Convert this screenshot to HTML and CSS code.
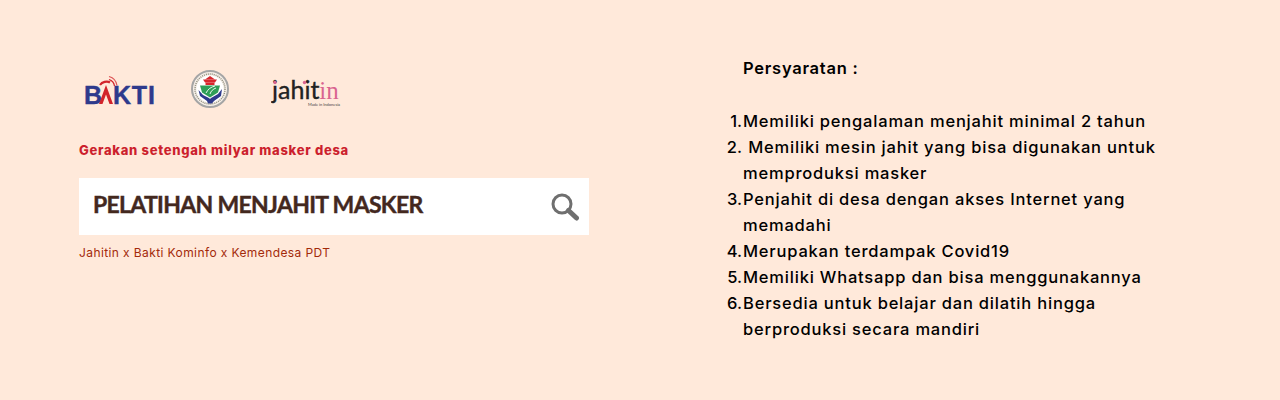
FILE: index.html
```html
<!DOCTYPE html>
<html lang="id">
<head>
<meta charset="utf-8">
<title>Pelatihan Menjahit Masker</title>
<link rel="stylesheet" href="styles.css">
</head>
<body>
<main class="banner">
  <section class="left">
    <div class="logos">
      <svg class="logo-bakti" width="72" height="38" viewBox="0 0 72 38">
        <path d="M25 3.500a11 11 0 0 1 8 9" fill="none" stroke="#d2232a" stroke-width="1.200" opacity=".75"/>
        <path d="M25 6.500a8 8 0 0 1 5.500 6.500" fill="none" stroke="#d2232a" stroke-width="1.300"/>
        <path d="M16 12c2-3 7-4.500 10-2.500" fill="none" stroke="#d2232a" stroke-width="2.200"/>
        <text class="bakti-text" x="0" y="31">B</text>
        <path d="M15 31 22 12 29 31h-3.500L22 21.500 18.500 31z" fill="#d2232a"/>
        <text class="bakti-text bakti-rest" x="29" y="31">KTI</text>
      </svg>
      <svg class="logo-seal" width="38" height="40" viewBox="0 0 38 40">
        <circle cx="19" cy="20" r="18" fill="#f6efe8" stroke="#a5a5a5" stroke-width="2"/>
        <circle cx="19" cy="20" r="15" fill="none" stroke="#8f8f7f" stroke-width="1.500" stroke-dasharray="1 1"/>
        <circle cx="19" cy="20" r="13.500" fill="#fff"/>
        <path d="M14 10.500 19 7l5 3.500z" fill="#d8262c"/>
        <path d="M12 10.500h14l-2 3h-10z" fill="#d8262c"/>
        <path d="M14.500 13.500h9V16h-9z" fill="#d8262c"/>
        <path d="M9 16.500h20l-2 7-8 5-8-5z" fill="#2f9e57"/>
        <path d="M15 24c2-4 5-6 9-7M19 25c1-3 3-5 6-6" fill="none" stroke="#fff" stroke-width=".9"/>
        <path d="M7.500 21 12 26l6 3 1 1 1-1 7-4 4-5-1 7-7 5-2 2.500h-4l-1-2.500-7-5z" fill="#2e3a8c"/>
      </svg>
      <svg class="logo-jahitin" width="72" height="32" viewBox="0 0 72 32">
        <text class="jahitin-text" x="1" y="24"><tspan class="jahitin-dark">jahit</tspan><tspan class="jahitin-in">in</tspan></text>
        <circle cx="4" cy="7.500" r="1.700" fill="#d9638f"/>
        <circle cx="33.500" cy="7.500" r="1.700" fill="#d9638f"/>
        <text class="jahitin-small" x="37" y="30.500">Made in Indonesia</text>
      </svg>
    </div>
    <p class="tagline">Gerakan setengah milyar masker desa</p>
    <div class="search">
      <h1 class="search-title">PELATIHAN MENJAHIT MASKER</h1>
      <svg class="search-icon" width="30" height="30" viewBox="0 0 30 30">
        <circle cx="12" cy="12" r="9" fill="none" stroke="#6f6f6f" stroke-width="3"/>
        <path d="M18.500 18.500 26.500 26" fill="none" stroke="#6f6f6f" stroke-width="5" stroke-linecap="round"/>
      </svg>
    </div>
    <p class="credit">Jahitin x Bakti Kominfo x Kemendesa PDT</p>
  </section>
  <section class="right">
    <h2 class="req-title">Persyaratan :</h2>
    <ol class="req-list">
      <li>Memiliki pengalaman menjahit minimal 2 tahun</li>
      <li>&nbsp;Memiliki mesin jahit yang bisa digunakan untuk memproduksi masker</li>
      <li>Penjahit di desa dengan akses Internet yang memadahi</li>
      <li>Merupakan terdampak Covid19</li>
      <li>Memiliki Whatsapp dan bisa menggunakannya</li>
      <li>Bersedia untuk belajar dan dilatih hingga berproduksi secara mandiri</li>
    </ol>
  </section>
</main>
</body>
</html>
```
FILE: styles.css
```css
* { box-sizing: border-box; }
html, body { margin: 0; padding: 0; }
body { background: #ffe9da; font-family: "Inter", "Liberation Sans", sans-serif; }
.banner { width: 1280px; height: 400px; display: flex; overflow: hidden; }
.left { width: 743px; padding: 69px 0 0 79px; flex: none; }
.logos { display: flex; align-items: flex-start; height: 41px; padding-left: 5px; }
.logo-bakti { margin-top: 4px; }
.logo-seal { margin-left: 35px; }
.logo-jahitin { margin-left: 42px; margin-top: 6px; }
.bakti-text { font: 700 25px "Liberation Sans", sans-serif; fill: #2e3a8c; stroke: #2e3a8c; stroke-width: .4px; }
.bakti-rest { letter-spacing: .8px; }
.jahitin-text { font: 400 25px "Lato", sans-serif; }
.jahitin-dark { fill: #222; stroke: #222; stroke-width: .35px; }
.jahitin-in { fill: #d9638f; font-family: "Liberation Serif", serif; }
.jahitin-small { font: 400 4px "Lato", sans-serif; fill: #444; }
.tagline { margin: 31px 0 0; font-size: 13px; line-height: 18px; font-weight: 800; color: #cc1f2d; letter-spacing: .7px; }
.search { margin-top: 19px; width: 510px; height: 57px; background: #fff; display: flex; align-items: center; justify-content: space-between; padding: 0 9px 0 14px; }
.search-title { margin: 0 0 5px; font: 700 23px/1 "Lato", sans-serif; color: #43281e; letter-spacing: -.7px; -webkit-text-stroke: .4px #43281e; }
.credit { margin: 9px 0 0; font-size: 12px; line-height: 18px; color: #a32a0a; letter-spacing: .4px; }
.right { flex: none; width: 420px; padding-top: 55px; }
.req-title { margin: 0 0 27px; font-size: 16.500px; line-height: 26px; font-weight: 600; color: #000; letter-spacing: .75px; }
.req-list { margin: 0 0 0 -20px; padding: 0; list-style: none; counter-reset: item; font-size: 16.500px; font-weight: 500; line-height: 26px; color: #000; letter-spacing: .8px; }
.req-list li { counter-increment: item; display: grid; grid-template-columns: 19px 1fr; column-gap: 1px; }
.req-list li::before { content: counter(item) "."; text-align: right; letter-spacing: 0; }
```
